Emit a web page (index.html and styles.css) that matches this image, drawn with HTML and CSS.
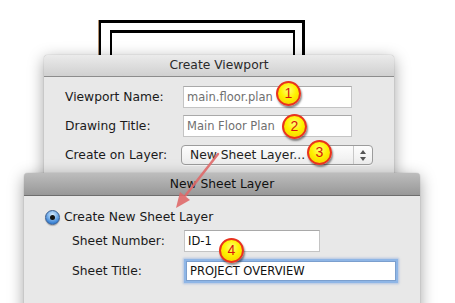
FILE: index.html
```html
<!DOCTYPE html>
<html>
<head>
<meta charset="utf-8">
<link rel="stylesheet" href="styles.css">
</head>
<body>
<div class="stage">
  <div class="frame-outer"></div>
  <div class="frame-inner"></div>

  <div class="dialog dialog-viewport">
    <div class="titlebar">Create Viewport</div>
    <div class="body form-grid">
      <span class="label">Viewport Name:</span>
      <div class="field">main.floor.plan</div>
      <span class="label">Drawing Title:</span>
      <div class="field">Main Floor Plan</div>
      <span class="label">Create on Layer:</span>
      <div class="popup">
        <span class="popup-text">New Sheet Layer...</span>
        <span class="stepper"><i class="up"></i><i class="down"></i></span>
      </div>
    </div>
  </div>

  <div class="dialog dialog-sheet">
    <div class="titlebar dark">New Sheet Layer</div>
    <div class="body sheet-body">
      <div class="radio-row">
        <span class="radio"><span class="dot"></span></span>
        <span class="label">Create New Sheet Layer</span>
      </div>
      <div class="sheet-grid">
        <span class="label">Sheet Number:</span>
        <div class="field field-num">ID-1</div>
        <span class="label">Sheet Title:</span>
        <div class="field field-title focused">PROJECT OVERVIEW</div>
      </div>
    </div>
  </div>

  <svg class="arrow" width="455" height="303" viewBox="0 0 455 303">
    <line x1="218" y1="154" x2="185.5" y2="195.5" stroke="#e06a6a" stroke-width="2.5" stroke-linecap="round"/>
    <polygon points="176,208 180,192 190,200" fill="#e06a6a"/>
  </svg>

  <div class="callout c1">1</div>
  <div class="callout c2">2</div>
  <div class="callout c3">3</div>
  <div class="callout c4">4</div>
</div>
</body>
</html>
```

FILE: styles.css
```css
* { box-sizing: border-box; }
html, body { margin: 0; padding: 0; background: #fff; }
body {
  font-family: "DejaVu Sans", "Lucida Grande", sans-serif;
  font-size: 12.3px;
  color: #1e1e1e;
}
.stage {
  position: relative;
  width: 455px;
  height: 303px;
  overflow: hidden;
  background: #fff;
}

/* drawing frame on canvas */
.frame-outer {
  position: absolute;
  left: 99px; top: 20px;
  width: 206px; height: 70px;
  border-top: 3px solid #000;
  border-left: 2px solid #000;
  border-right: 3px solid #000;
  box-shadow: -1px 0 0 #b59270;
}
.frame-inner {
  position: absolute;
  left: 110px; top: 30px;
  width: 185px; height: 60px;
  border-top: 3px solid #000;
  border-left: 2px solid #000;
  border-right: 2px solid #000;
}

/* dialogs (windows on the canvas) */
.dialog {
  position: absolute;
  background: #e8e8e8;
  border-radius: 4px 4px 0 0;
  box-shadow: 0 4px 16px rgba(0,0,0,0.38), 0 0 1px rgba(0,0,0,0.4);
}
.dialog-viewport {
  left: 44px; top: 55px;
  width: 350px; height: 130px;
}
.dialog-sheet {
  left: 24px; top: 173px;
  width: 396px; height: 150px;
}
.titlebar {
  height: 22px;
  line-height: 21px;
  text-align: center;
  color: #2a2a2a;
  border-radius: 4px 4px 0 0;
  background: linear-gradient(#ebebeb, #d0d0d0);
  border-bottom: 1px solid #8c8c8c;
}
.titlebar.dark {
  height: 23px;
  line-height: 22px;
  background: linear-gradient(#bdbdbd, #989898);
  border-bottom: 1px solid #6e6e6e;
  color: #111;
}

.form-grid {
  display: grid;
  grid-template-columns: 118px 169px;
  row-gap: 7px;
  align-items: center;
  padding: 9px 0 0 21px;
}
.label { color: #1a1a1a; white-space: nowrap; }

.field {
  height: 22px;
  background: #fff;
  border: 1px solid #c4c4c4;
  border-top-color: #a9a9a9;
  padding-left: 3px;
  font-size: 11.5px;
  line-height: 20px;
  color: #6f6f6f;
}

.popup {
  position: relative;
  margin-left: -2px;
  margin-top: 1px;
  width: 192px;
  height: 20px;
  border: 1px solid #9c9c9c;
  border-radius: 4px;
  background: linear-gradient(#fdfdfd, #ededed);
  display: flex;
  align-items: center;
  box-shadow: 0 1px 0 rgba(255,255,255,0.6);
}
.popup-text {
  flex: 1;
  padding-left: 8px;
  color: #222;
}
.stepper {
  width: 19px;
  height: 100%;
  border-left: 1px solid #c8c8c8;
  display: flex;
  flex-direction: column;
  align-items: center;
  justify-content: center;
  gap: 3px;
}
.stepper i {
  display: block;
  width: 0; height: 0;
  border-left: 3px solid transparent;
  border-right: 3px solid transparent;
}
.stepper .up { border-bottom: 4px solid #555; }
.stepper .down { border-top: 4px solid #555; }

/* sheet dialog */
.sheet-body {
  display: flex;
  flex-direction: column;
  padding: 13px 0 0 21px;
}
.radio-row {
  display: flex;
  align-items: center;
  gap: 4px;
  height: 16px;
  font-size: 12.3px;
}
.radio {
  width: 15px; height: 15px;
  border-radius: 50%;
  border: 1px solid #3b5e8f;
  background: radial-gradient(circle at 50% 30%, #d8ecfd 0%, #8dbdee 35%, #3f86d6 70%, #2a63ad 100%);
  display: flex;
  align-items: center;
  justify-content: center;
  box-shadow: 0 1px 1px rgba(0,0,0,0.25);
}
.radio .dot {
  width: 5px; height: 5px;
  border-radius: 50%;
  background: #111;
}
.sheet-grid {
  display: grid;
  grid-template-columns: 112px 136px 76px;
  row-gap: 9px;
  align-items: center;
  padding-left: 27px;
  margin-top: 5px;
}
.field-num {
  color: #111;
  grid-column: 2;
}
.sheet-grid .label { grid-column: 1; }
.field-title {
  grid-column: 2 / 4;
  margin-left: 2px;
  width: 210px;
  height: 20px;
  line-height: 18px;
  color: #111;
}
.focused {
  border-color: #7b9fce;
  box-shadow: 0 0 0 2px #8fb6e6, 0 0 2px 3px rgba(120,160,220,0.5);
}

/* overlays */
.arrow {
  position: absolute;
  left: 0; top: 0;
  pointer-events: none;
  opacity: 0.9;
}
.callout {
  position: absolute;
  width: 25px; height: 25px;
  border-radius: 50%;
  border: 2px solid #e8321e;
  background: radial-gradient(circle at 50% 35%, #ffff70 0%, #fff200 45%, #f2c800 100%);
  color: #d8160c;
  font-family: "Liberation Sans", Arial, sans-serif;
  font-size: 14px;
  line-height: 21px;
  text-align: center;
  box-shadow: 1px 2px 2px rgba(0,0,0,0.45);
}
.c1 { left: 276px; top: 81px; }
.c2 { left: 282px; top: 114px; }
.c3 { left: 307px; top: 140px; }
.c4 { left: 219px; top: 238px; }
```
